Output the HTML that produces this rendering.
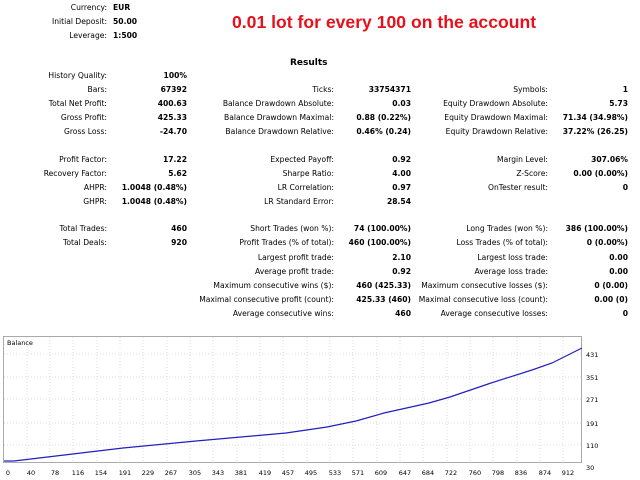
<!DOCTYPE html>
<html><head><meta charset="utf-8"><style>
body{margin:0;width:640px;height:480px;background:#fff;position:relative;overflow:hidden;font-family:"DejaVu Sans","Liberation Sans",sans-serif;font-size:7.6px;color:#000}
.a{position:absolute;line-height:12px;white-space:nowrap}
.b{font-weight:bold}
</style></head><body>
<div class="a" style="right:533px;top:2px">Currency:</div><div class="a b" style="left:113px;top:2px">EUR</div>
<div class="a" style="right:533px;top:16px">Initial Deposit:</div><div class="a b" style="left:113px;top:16px">50.00</div>
<div class="a" style="right:533px;top:30px">Leverage:</div><div class="a b" style="left:113px;top:30px">1:500</div>
<div class="a" style="left:232px;top:11px;font-family:'Liberation Sans',sans-serif;font-size:17.6px;line-height:22px;color:#e8101a;font-weight:bold">0.01 lot for every 100 on the account</div>
<div class="a b" style="left:290px;top:57px;font-size:9px">Results</div>

<div class="a" style="right:533px;top:70px">History Quality:</div><div class="a b" style="right:453px;top:70px">100%</div>

<div class="a" style="right:533px;top:84px">Bars:</div><div class="a b" style="right:453px;top:84px">67392</div>
<div class="a" style="right:306px;top:84px">Ticks:</div><div class="a b" style="right:229px;top:84px">33754371</div>
<div class="a" style="right:92px;top:84px">Symbols:</div><div class="a b" style="right:12px;top:84px">1</div>

<div class="a" style="right:533px;top:98px">Total Net Profit:</div><div class="a b" style="right:453px;top:98px">400.63</div>
<div class="a" style="right:306px;top:98px">Balance Drawdown Absolute:</div><div class="a b" style="right:229px;top:98px">0.03</div>
<div class="a" style="right:92px;top:98px">Equity Drawdown Absolute:</div><div class="a b" style="right:12px;top:98px">5.73</div>

<div class="a" style="right:533px;top:112px">Gross Profit:</div><div class="a b" style="right:453px;top:112px">425.33</div>
<div class="a" style="right:306px;top:112px">Balance Drawdown Maximal:</div><div class="a b" style="right:229px;top:112px">0.88 (0.22%)</div>
<div class="a" style="right:92px;top:112px">Equity Drawdown Maximal:</div><div class="a b" style="right:12px;top:112px">71.34 (34.98%)</div>

<div class="a" style="right:533px;top:126px">Gross Loss:</div><div class="a b" style="right:453px;top:126px">-24.70</div>
<div class="a" style="right:306px;top:126px">Balance Drawdown Relative:</div><div class="a b" style="right:229px;top:126px">0.46% (0.24)</div>
<div class="a" style="right:92px;top:126px">Equity Drawdown Relative:</div><div class="a b" style="right:12px;top:126px">37.22% (26.25)</div>

<div class="a" style="right:533px;top:154px">Profit Factor:</div><div class="a b" style="right:453px;top:154px">17.22</div>
<div class="a" style="right:306px;top:154px">Expected Payoff:</div><div class="a b" style="right:229px;top:154px">0.92</div>
<div class="a" style="right:92px;top:154px">Margin Level:</div><div class="a b" style="right:12px;top:154px">307.06%</div>

<div class="a" style="right:533px;top:168px">Recovery Factor:</div><div class="a b" style="right:453px;top:168px">5.62</div>
<div class="a" style="right:306px;top:168px">Sharpe Ratio:</div><div class="a b" style="right:229px;top:168px">4.00</div>
<div class="a" style="right:92px;top:168px">Z-Score:</div><div class="a b" style="right:12px;top:168px">0.00 (0.00%)</div>

<div class="a" style="right:533px;top:182px">AHPR:</div><div class="a b" style="right:453px;top:182px">1.0048 (0.48%)</div>
<div class="a" style="right:306px;top:182px">LR Correlation:</div><div class="a b" style="right:229px;top:182px">0.97</div>
<div class="a" style="right:92px;top:182px">OnTester result:</div><div class="a b" style="right:12px;top:182px">0</div>

<div class="a" style="right:533px;top:196px">GHPR:</div><div class="a b" style="right:453px;top:196px">1.0048 (0.48%)</div>
<div class="a" style="right:306px;top:196px">LR Standard Error:</div><div class="a b" style="right:229px;top:196px">28.54</div>

<div class="a" style="right:533px;top:223px">Total Trades:</div><div class="a b" style="right:453px;top:223px">460</div>
<div class="a" style="right:306px;top:223px">Short Trades (won %):</div><div class="a b" style="right:229px;top:223px">74 (100.00%)</div>
<div class="a" style="right:92px;top:223px">Long Trades (won %):</div><div class="a b" style="right:12px;top:223px">386 (100.00%)</div>

<div class="a" style="right:533px;top:237px">Total Deals:</div><div class="a b" style="right:453px;top:237px">920</div>
<div class="a" style="right:306px;top:237px">Profit Trades (% of total):</div><div class="a b" style="right:229px;top:237px">460 (100.00%)</div>
<div class="a" style="right:92px;top:237px">Loss Trades (% of total):</div><div class="a b" style="right:12px;top:237px">0 (0.00%)</div>

<div class="a" style="right:306px;top:252px">Largest profit trade:</div><div class="a b" style="right:229px;top:252px">2.10</div>
<div class="a" style="right:92px;top:252px">Largest loss trade:</div><div class="a b" style="right:12px;top:252px">0.00</div>

<div class="a" style="right:306px;top:266px">Average profit trade:</div><div class="a b" style="right:229px;top:266px">0.92</div>
<div class="a" style="right:92px;top:266px">Average loss trade:</div><div class="a b" style="right:12px;top:266px">0.00</div>

<div class="a" style="right:306px;top:280px">Maximum consecutive wins ($):</div><div class="a b" style="right:229px;top:280px">460 (425.33)</div>
<div class="a" style="right:92px;top:280px">Maximum consecutive losses ($):</div><div class="a b" style="right:12px;top:280px">0 (0.00)</div>

<div class="a" style="right:306px;top:294px">Maximal consecutive profit (count):</div><div class="a b" style="right:229px;top:294px">425.33 (460)</div>
<div class="a" style="right:92px;top:294px">Maximal consecutive loss (count):</div><div class="a b" style="right:12px;top:294px">0.00 (0)</div>

<div class="a" style="right:306px;top:308px">Average consecutive wins:</div><div class="a b" style="right:229px;top:308px">460</div>
<div class="a" style="right:92px;top:308px">Average consecutive losses:</div><div class="a b" style="right:12px;top:308px">0</div>

<svg width="640" height="150" style="position:absolute;left:0;top:330px" font-family="DejaVu Sans, sans-serif" font-size="6.5">
<rect x="3.5" y="6.5" width="578" height="126" fill="#fff" stroke="#aaa"/>
<g stroke="#ddd" stroke-dasharray="1,2">
<line x1="4" x2="581" y1="24" y2="24"/><line x1="4" x2="581" y1="47" y2="47"/><line x1="4" x2="581" y1="69" y2="69"/><line x1="4" x2="581" y1="93" y2="93"/><line x1="4" x2="581" y1="115" y2="115"/>
<line x1="27" x2="27" y1="7" y2="132"/><line x1="50" x2="50" y1="7" y2="132"/><line x1="73" x2="73" y1="7" y2="132"/><line x1="97" x2="97" y1="7" y2="132"/><line x1="120" x2="120" y1="7" y2="132"/><line x1="143" x2="143" y1="7" y2="132"/><line x1="167" x2="167" y1="7" y2="132"/><line x1="190" x2="190" y1="7" y2="132"/><line x1="213" x2="213" y1="7" y2="132"/><line x1="237" x2="237" y1="7" y2="132"/><line x1="260" x2="260" y1="7" y2="132"/><line x1="283" x2="283" y1="7" y2="132"/><line x1="307" x2="307" y1="7" y2="132"/><line x1="330" x2="330" y1="7" y2="132"/><line x1="353" x2="353" y1="7" y2="132"/><line x1="377" x2="377" y1="7" y2="132"/><line x1="400" x2="400" y1="7" y2="132"/><line x1="423" x2="423" y1="7" y2="132"/><line x1="447" x2="447" y1="7" y2="132"/><line x1="470" x2="470" y1="7" y2="132"/><line x1="493" x2="493" y1="7" y2="132"/><line x1="517" x2="517" y1="7" y2="132"/><line x1="540" x2="540" y1="7" y2="132"/><line x1="563" x2="563" y1="7" y2="132"/>
</g>
<text x="7" y="15">Balance</text>
<polyline fill="none" stroke="#2020c0" stroke-width="1.2" points="4,131 14,131 123,118 196,111 286,103 327,97 356,91 384,83 429,73 450,67 491,53 532,40 552,33 582,18"/>
<g><text x="586" y="27">431</text><text x="586" y="50">351</text><text x="586" y="72">271</text><text x="586" y="96">191</text><text x="586" y="118">110</text><text x="586" y="140">30</text></g>
<g text-anchor="middle"><text x="8" y="145">0</text><text x="31" y="145">40</text><text x="55" y="145">78</text><text x="78" y="145">116</text><text x="101" y="145">154</text><text x="125" y="145">191</text><text x="148" y="145">229</text><text x="171" y="145">267</text><text x="195" y="145">305</text><text x="218" y="145">343</text><text x="241" y="145">381</text><text x="265" y="145">419</text><text x="288" y="145">457</text><text x="311" y="145">495</text><text x="335" y="145">533</text><text x="358" y="145">571</text><text x="381" y="145">609</text><text x="405" y="145">647</text><text x="428" y="145">684</text><text x="451" y="145">722</text><text x="475" y="145">760</text><text x="498" y="145">798</text><text x="521" y="145">836</text><text x="545" y="145">874</text><text x="568" y="145">912</text></g>
</svg>
</body></html>
